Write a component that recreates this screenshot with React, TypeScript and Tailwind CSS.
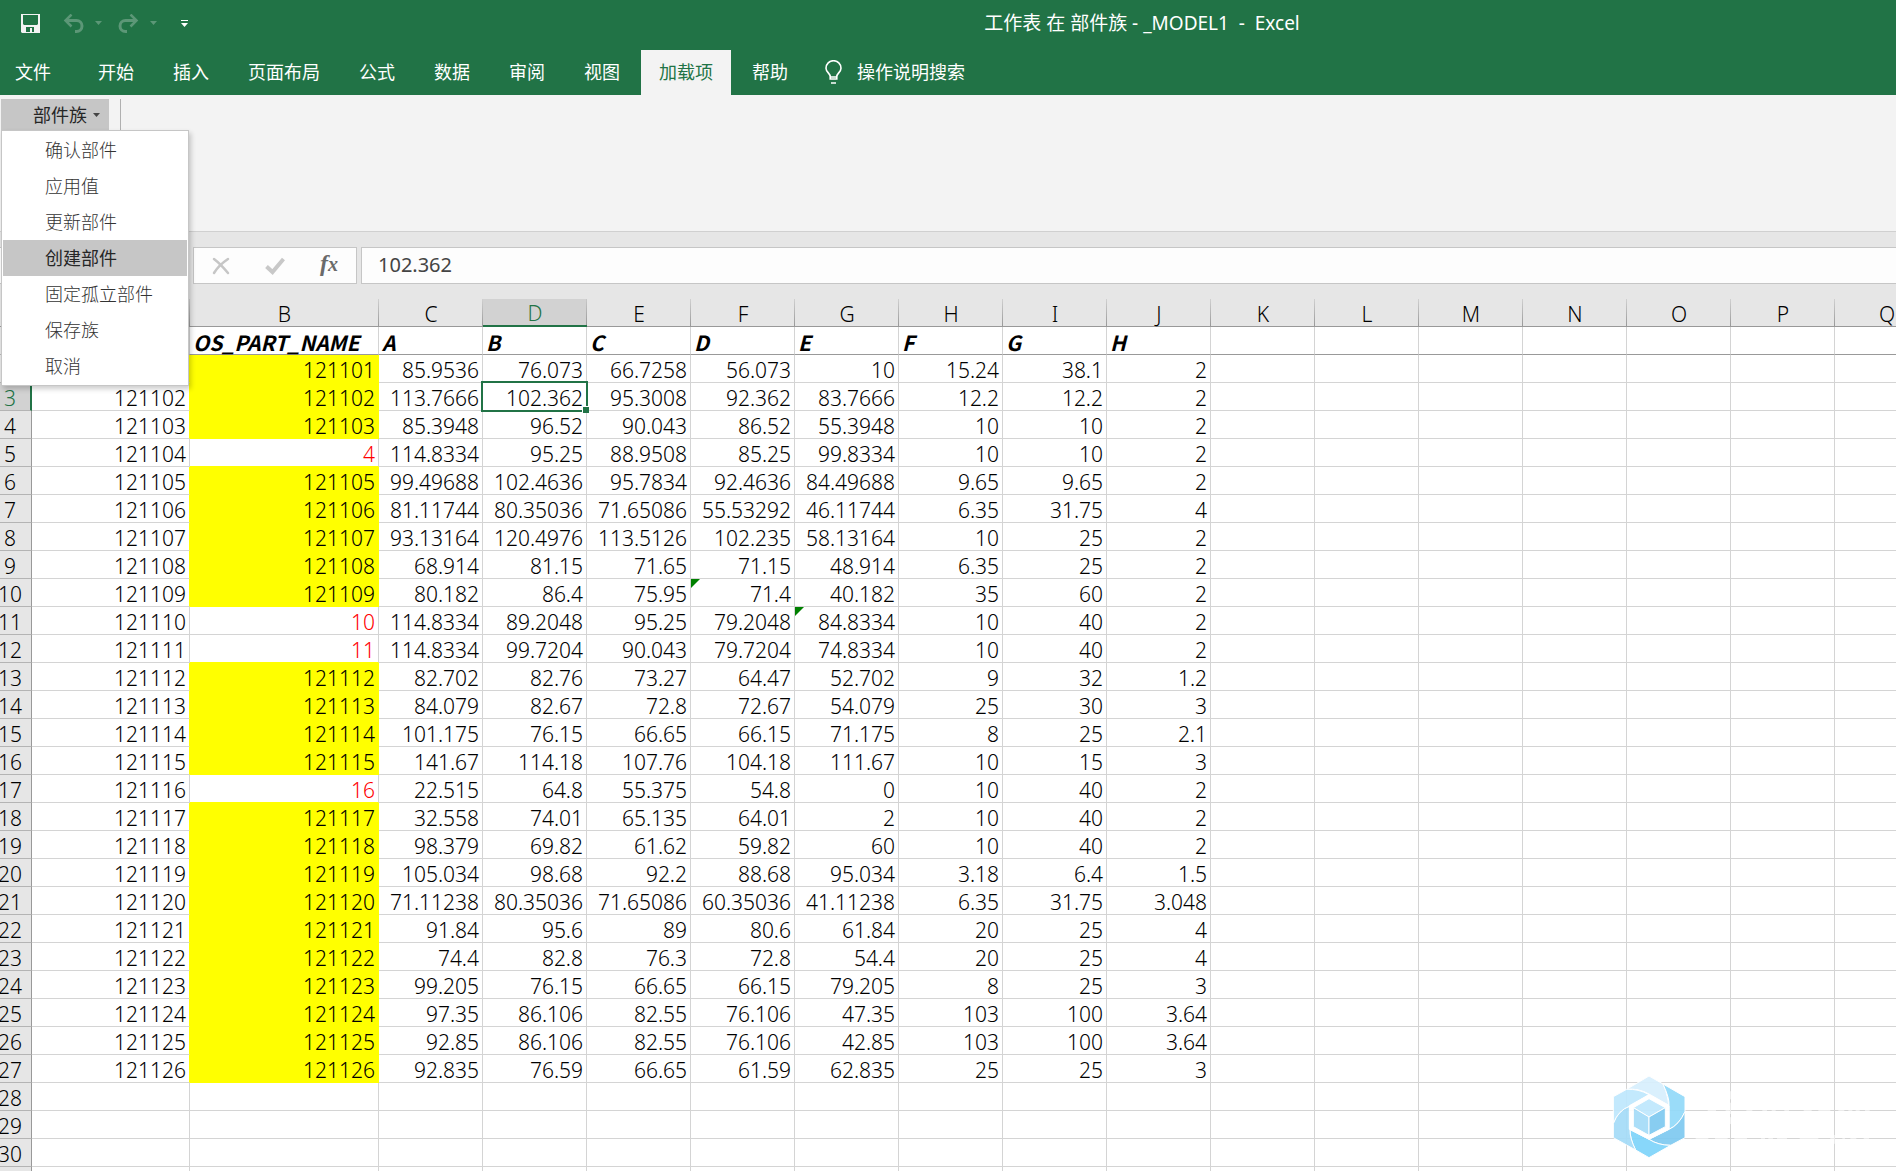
import React from "react";

const TABS = ["开始", "插入", "页面布局", "公式", "数据", "审阅", "视图", "加载项", "帮助"];
const MENU = ["确认部件", "应用值", "更新部件", "创建部件", "固定孤立部件", "保存族", "取消"];
const COLUMNS = "ABCDEFGHIJKLMNOPQ".split("");
const FIELD_NAMES = ["", "OS_PART_NAME", "A", "B", "C", "D", "E", "F", "G", "H"];

const DATA = `- 121101 85.9536 76.073 66.7258 56.073 10 15.24 38.1 2
121102 121102 113.7666 102.362 95.3008 92.362 83.7666 12.2 12.2 2
121103 121103 85.3948 96.52 90.043 86.52 55.3948 10 10 2
121104 4 114.8334 95.25 88.9508 85.25 99.8334 10 10 2
121105 121105 99.49688 102.4636 95.7834 92.4636 84.49688 9.65 9.65 2
121106 121106 81.11744 80.35036 71.65086 55.53292 46.11744 6.35 31.75 4
121107 121107 93.13164 120.4976 113.5126 102.235 58.13164 10 25 2
121108 121108 68.914 81.15 71.65 71.15 48.914 6.35 25 2
121109 121109 80.182 86.4 75.95 71.4 40.182 35 60 2
121110 10 114.8334 89.2048 95.25 79.2048 84.8334 10 40 2
121111 11 114.8334 99.7204 90.043 79.7204 74.8334 10 40 2
121112 121112 82.702 82.76 73.27 64.47 52.702 9 32 1.2
121113 121113 84.079 82.67 72.8 72.67 54.079 25 30 3
121114 121114 101.175 76.15 66.65 66.15 71.175 8 25 2.1
121115 121115 141.67 114.18 107.76 104.18 111.67 10 15 3
121116 16 22.515 64.8 55.375 54.8 0 10 40 2
121117 121117 32.558 74.01 65.135 64.01 2 10 40 2
121118 121118 98.379 69.82 61.62 59.82 60 10 40 2
121119 121119 105.034 98.68 92.2 88.68 95.034 3.18 6.4 1.5
121120 121120 71.11238 80.35036 71.65086 60.35036 41.11238 6.35 31.75 3.048
121121 121121 91.84 95.6 89 80.6 61.84 20 25 4
121122 121122 74.4 82.8 76.3 72.8 54.4 20 25 4
121123 121123 99.205 76.15 66.65 66.15 79.205 8 25 3
121124 121124 97.35 86.106 82.55 76.106 47.35 103 100 3.64
121125 121125 92.85 86.106 82.55 76.106 42.85 103 100 3.64
121126 121126 92.835 76.59 66.65 61.59 62.835 25 25 3`
  .split("\n")
  .map((line) => line.split(" ").map((value) => (value === "-" ? "" : value)));

const ROWS: string[][] = [FIELD_NAMES, ...DATA, [], [], [], []];
const FLAGGED = ["F10", "G11"];

const isFilled = (row?: string[]) => !!row && row[1]?.length === 6;

function Caret({ className }: { className: string }) {
  return (
    <svg viewBox="0 0 7 4" className={"h-1 w-[7px] " + className} fill="currentColor" aria-hidden="true">
      <path d="M0 0h7L3.500 4z" />
    </svg>
  );
}

function TitleBar() {
  return (
    <div className="flex h-[50px] items-center">
      <div className="flex h-full items-center pl-[21px] pb-1 text-white">
        <button aria-label="保存">
          <svg viewBox="0 0 19 19" className="size-[19px]" aria-hidden="true">
            <path
              fill="#f3f3f3"
              fillRule="evenodd"
              d="M0 0h19v19H1l-1-1zM2 1v9l1 1h13l1-1V1zM5 13v5h4v-4h2v4h2v-5z"
            />
          </svg>
        </button>
        <button aria-label="撤消" className="ml-[23px] flex items-center text-[#5c9777]">
          <svg viewBox="0 0 21 19" className="h-[19px] w-[21px]" fill="none" stroke="currentColor" strokeWidth="3" aria-hidden="true">
            <path d="M3 6.500h10.500a5.500 5.500 0 0 1 0 11H12" />
            <path d="M8.500 0.500 2.500 6.500l6 6" strokeWidth="2.500" />
          </svg>
          <Caret className="ml-[11px]" />
        </button>
        <button aria-label="恢复" className="ml-4 flex items-center text-[#5c9777]">
          <svg viewBox="0 0 21 19" className="h-[19px] w-[21px]" fill="none" stroke="currentColor" strokeWidth="3" aria-hidden="true">
            <path d="M18 6.500H7.500a5.500 5.500 0 0 0 0 11H9" />
            <path d="M12.500 0.500l6 6-6 6" strokeWidth="2.500" />
          </svg>
          <Caret className="ml-[11px]" />
        </button>
        <button aria-label="自定义快速访问工具栏" className="ml-6">
          <svg viewBox="0 0 7 7" className="size-[7px]" fill="#fff" aria-hidden="true">
            <path d="M0 0h7v1H0zM0 3h7L3.500 7z" />
          </svg>
        </button>
      </div>
      <h1 className="flex-1 whitespace-pre pb-1 pl-[200px] text-center text-[19px] leading-6 text-white">
        {"工作表 在 部件族 - _MODEL1  -  Excel"}
      </h1>
    </div>
  );
}

function TabBar() {
  return (
    <nav className="flex h-[45px] items-stretch text-lg leading-6 text-white">
      <button className="mr-[29px] pb-[2px] pl-[15px]">文件</button>
      {TABS.map((tab) => (
        <button
          key={tab}
          className={
            tab === "加载项" ? "mr-[3px] bg-[#f3f3f3] px-[18px] pb-[2px] text-[#217346]" : "pb-[2px] pl-[18px] pr-[21px]"
          }
        >
          {tab}
        </button>
      ))}
      <button className="ml-4 flex items-center pb-[2px]">
        <svg viewBox="0 0 17 24" className="mr-[15px] h-6 w-[17px]" fill="none" stroke="#fff" strokeWidth="1.600" aria-hidden="true">
          <path d="M5.200 19v-2.500C5.200 13.500 1 12 1 8.200a7.500 7.500 0 0 1 15 0c0 3.800-4.200 5.300-4.200 8.300V19z" />
          <path d="M5.500 17h6M6 23h5" />
        </svg>
        操作说明搜索
      </button>
    </nav>
  );
}

function Ribbon() {
  return (
    <div className="flex h-[137px] items-start border-b border-[#d0d0d0] bg-[#f3f3f3] pt-1 pl-px">
      <div className="relative">
        <button className="flex h-[31px] w-[108px] items-center bg-[#c6c6c6] pl-8 text-lg leading-6 text-[#262626]">
          部件族
          <Caret className="ml-[6px] text-[#444]" />
        </button>
        <ul
          role="menu"
          className="absolute left-0 top-[31px] z-10 w-[188px] border border-[#c6c6c6] bg-white p-px shadow-[2px_3px_5px_rgba(0,0,0,0.2)]"
        >
          {MENU.map((item) => (
            <li key={item} role="none">
              <button
                role="menuitem"
                className={
                  "flex h-9 w-full items-center whitespace-nowrap pl-[42px] text-lg leading-6 " +
                  (item === "创建部件" ? "bg-[#c6c6c6] text-[#262626]" : "font-light text-[#333]")
                }
              >
                {item}
              </button>
            </li>
          ))}
        </ul>
      </div>
      <div className="ml-[11px] h-[31px] w-px bg-[#b0b0b0]" />
    </div>
  );
}

function FormulaBar() {
  return (
    <div className="flex h-[67px] items-center gap-1 bg-[#e6e6e6]">
      <input
        aria-label="名称框"
        className="h-[37px] w-[189px] border border-l-0 border-[#c6c6c6] bg-[#fdfdfd] px-2 text-lg"
      />
      <div className="flex h-[37px] w-[164px] items-center border border-[#c6c6c6] bg-[#fdfdfd]">
        <button aria-label="取消输入" className="ml-[18px]">
          <svg viewBox="0 0 18 18" className="size-[18px]" fill="none" stroke="#c6c6c6" strokeLinecap="round" aria-hidden="true">
            <path d="M2 2c4 3 9 8 14 14" strokeWidth="2.500" />
            <path d="M16 2C10 6 5 11 2 16" strokeWidth="2.500" />
          </svg>
        </button>
        <button aria-label="输入" className="ml-[35px]">
          <svg viewBox="0 0 20 18" className="h-[18px] w-5" fill="none" stroke="#c8c8c8" aria-hidden="true">
            <path d="M1.500 9.500 7.500 15 18.500 2" strokeWidth="4" />
          </svg>
        </button>
        <button
          aria-label="插入函数"
          className='ml-[35px] flex items-baseline pb-1 font-["Liberation_Serif",serif] font-bold italic leading-6 text-[#6a6a6a]'
        >
          <span className="text-2xl leading-6">f</span>
          <span className="text-xl leading-6">x</span>
        </button>
      </div>
      <input
        aria-label="编辑栏"
        defaultValue="102.362"
        className='h-[37px] min-w-0 flex-1 border border-r-0 border-[#c6c6c6] bg-[#fdfdfd] pb-[2px] pl-4 font-["Noto_Sans",sans-serif] text-[20px] text-[#444]'
      />
    </div>
  );
}

function cellClass(r: number, c: number) {
  const row = ROWS[r];
  const filled = isFilled(row) && r > 0;
  const nextFilled = isFilled(ROWS[r + 1]);
  const parts = ["relative h-7 border-r border-b pb-0 whitespace-nowrap"];
  if (r === 0) {
    parts.push(
      'border-r-[#d4d4d4] border-b-[#999] pt-[2px] pl-[3px] text-left font-["Noto_Sans_CJK_SC",sans-serif] font-bold italic leading-6'
    );
    return parts.join(" ");
  }
  parts.push("pt-1 pr-[3px] pl-0 text-right font-light leading-[23px]");
  if (c === 1) {
    parts.push(filled ? "bg-[#ff0] border-[#ff0]" : "border-r-[#d4d4d4]");
    if (!filled) parts.push(nextFilled ? "border-b-[#ff0]" : "border-b-[#d4d4d4]");
    if (!filled) parts.push("text-[#f00]");
  } else {
    parts.push("border-b-[#d4d4d4]");
    parts.push(c === 0 && filled ? "border-r-[#ff0]" : "border-r-[#d4d4d4]");
  }
  return parts.join(" ");
}

function Sheet() {
  return (
    <div className="min-h-0 flex-1 overflow-hidden bg-white">
      <table className='w-max border-separate border-spacing-0 font-["Noto_Sans","Noto_Sans_CJK_SC",sans-serif] text-[21px] text-black'>
        <colgroup>
          <col className="w-8" />
          <col className="w-[158px]" />
          <col className="w-[189px]" />
          {COLUMNS.slice(2).map((c) => (
            <col key={c} className="w-[104px]" />
          ))}
        </colgroup>
        <thead>
          <tr>
            <th className="h-7 min-w-8 border-r border-b border-[#999] bg-[#e6e6e6] p-0" aria-label="全选" />
            {COLUMNS.map((c) => (
              <th
                key={c}
                className={
                  "h-7 p-0 pt-[3px] font-light leading-[23px] " +
                  (c === "D"
                    ? "border-b-2 border-[#217346] bg-[#d2d2d2] bg-[linear-gradient(#c8c8c8,#999)] bg-[size:1px_100%] bg-right bg-no-repeat text-[#217346]"
                    : "border-b border-[#999] bg-[#e6e6e6] bg-[linear-gradient(#d0d0d0,#999)] bg-[size:1px_100%] bg-right bg-no-repeat")
                }
              >
                {c}
              </th>
            ))}
          </tr>
        </thead>
        <tbody>
          {ROWS.map((row, r) => (
            <tr key={r}>
              <th
                className={
                  "h-7 border-b border-b-[#b4b4b4] p-0 pt-1 font-light leading-[23px] " +
                  (r === 2 ? "border-r-2 border-r-[#217346] bg-[#d2d2d2] text-[#217346]" : "border-r border-r-[#999] bg-[#e6e6e6]")
                }
                aria-label={String(r + 1)}
              >
                {r > 1 && <div className="flex w-5 justify-center">{r + 1}</div>}
              </th>
              {COLUMNS.map((c, i) => (
                <td key={c} className={cellClass(r, i)}>
                  {row[i]}
                  {FLAGGED.includes(c + (r + 1)) && (
                    <span className="absolute left-0 top-0 size-[9px] bg-[#008000] [clip-path:polygon(0_0,100%_0,0_100%)]" />
                  )}
                  {r === 2 && c === "D" && (
                    <span className="absolute -inset-[2px] z-10 border-2 border-[#217346]">
                      <span className="absolute -bottom-[3px] -right-[3px] size-[7px] border-l border-t border-white bg-[#217346]" />
                    </span>
                  )}
                </td>
              ))}
            </tr>
          ))}
        </tbody>
      </table>
    </div>
  );
}

function Watermark() {
  return (
    <svg viewBox="0 0 810 285" className="pointer-events-none absolute bottom-[6px] right-[21px] w-[270px]" aria-hidden="true">
      <g stroke="#fff" strokeWidth="3" opacity="0.93">
        <path fill="#d8effd" d="M132 18L174 42Q194 85 192 135V106L132 72Q100 54 65 58Z" />
        <path fill="#93daf9" d="M174 42L240 80V125Q222 165 192 178V106Q194 85 174 42Z" />
        <path fill="#7fcaf0" d="M240 125V203L197 226Q160 226 132 208L192 178Q222 165 240 125Z" />
        <path fill="#80d4fa" d="M197 226L132 263L92 240Q74 205 75 178L132 208Q160 226 197 226Z" />
        <path fill="#a5dcf8" d="M92 240L25 203V160Q40 120 75 108V178Q74 205 92 240Z" />
        <path fill="#bfe8fd" d="M25 160V80L65 58Q100 56 132 74L75 108Q40 120 25 160Z" />
        <path fill="#fff" d="M132 74L192 107V178L132 208L73 178V107Z" />
        <path fill="#bfe8fd" d="M132 86L181 113L132 141L85 113Z" />
        <path fill="#a5dcf8" d="M85 113L132 141V196L85 170Z" />
        <path fill="#7fcaf0" d="M181 113L132 141V196L181 170Z" />
      </g>
      <g stroke="#fff" strokeWidth="4" opacity="0.55" fill="none">
        <path d="M308 121h25M362 121h12M424 121h18M472 121h14M500 121h12M538 121h14M596 121h24M640 121h36M700 121h18M730 121h12M752 121h12M780 121h14" />
        <path d="M272 205h38M330 205h38M388 205h38M468 205h12M490 205h14M516 205h30M584 205h56M676 205h14M712 205h8M736 205h18M776 205h16" />
        <path d="M376 64v24M376 98v34M376 142v20M688 195v26" />
      </g>
    </svg>
  );
}

export default function App() {
  return (
    <div className='relative flex h-screen flex-col overflow-hidden bg-white font-["Noto_Sans","Noto_Sans_CJK_SC",sans-serif]'>
      <header className="bg-[#217346]">
        <TitleBar />
        <TabBar />
      </header>
      <Ribbon />
      <FormulaBar />
      <Sheet />
      <Watermark />
    </div>
  );
}
